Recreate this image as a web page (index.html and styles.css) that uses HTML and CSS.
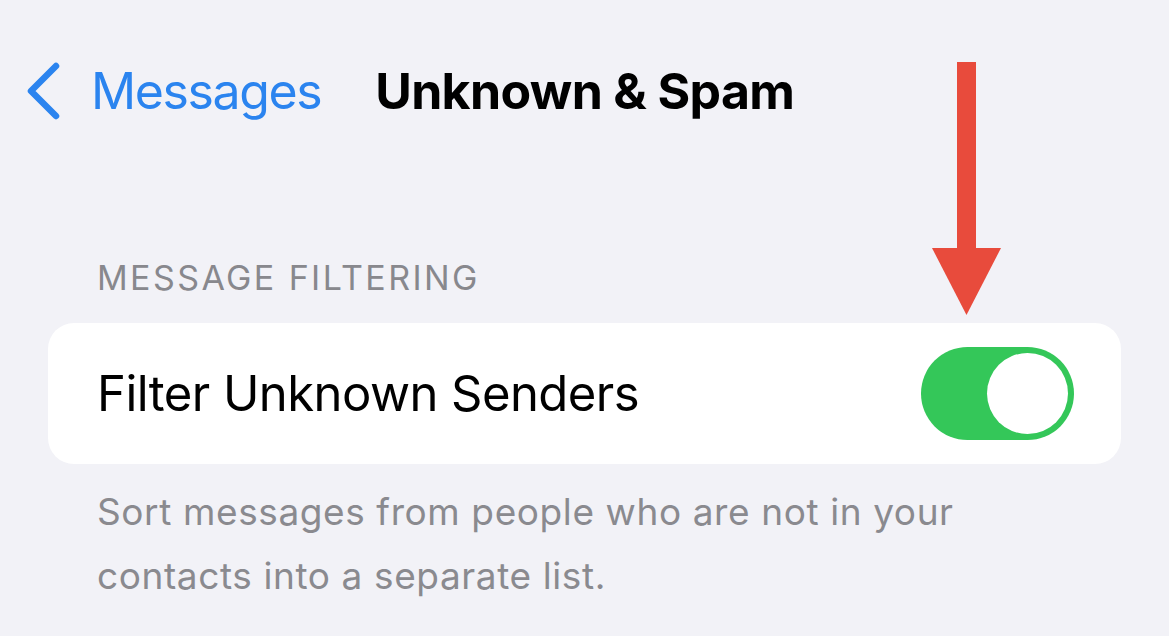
FILE: index.html
```html
<!DOCTYPE html>
<html lang="en">
  <head>
    <meta charset="UTF-8" />
    <meta name="viewport" content="width=device-width, initial-scale=1.0" />
    <title>Unknown &amp; Spam</title>
    <link rel="stylesheet" href="styles.css">
  </head>

  <body>
    <div class="screen">
      <!-- top bar -->
      <div class="navbar">
        <a class="back" href="#">
          <svg class="chevron" width="36" height="58" viewBox="0 0 36 58">
            <path d="M31 4 L6 29 L31 54" fill="none" stroke="#2b84ef" stroke-width="6.5"
              stroke-linecap="round" stroke-linejoin="round" />
          </svg>
          <span>Messages</span>
        </a>
        <h1 class="title">Unknown &amp; Spam</h1>
      </div>

      <!-- filtering group -->
      <div class="group">
        <div class="group-header">MESSAGE FILTERING</div>
        <div class="card">
          <div class="row">
            <span class="row-label">Filter Unknown Senders</span>
            <div class="switch on">
              <div class="knob"></div>
            </div>
          </div>
        </div>
        <p class="group-footer">
          Sort messages from people who are not in your<br />
          contacts into a separate list.
        </p>
      </div>

      <!-- red pointer -->
      <svg class="pointer" width="70" height="254" viewBox="0 0 70 254">
        <rect x="25" y="0" width="19" height="188" fill="#e84b3c" />
        <polygon points="0,186 69,186 34.5,253" fill="#e84b3c" />
      </svg>
    </div>
  </body>
</html>
```

FILE: styles.css
```css
* {
  margin: 0;
  padding: 0;
  box-sizing: border-box;
}
body {
  background: #f2f2f7;
  font-family: Inter, "Noto Sans", "Liberation Sans", sans-serif;
  overflow: hidden;
}
.screen {
  position: relative;
  width: 1169px;
  height: 636px;
  padding: 0 48px;
}

/* 上方導覽列 */
.navbar {
  display: flex;
  align-items: center;
  height: 182px;
}
.back {
  display: flex;
  align-items: center;
  gap: 30px;
  margin-left: -23px;
  color: #2b84ef;
  text-decoration: none;
  font-size: 50px;
  letter-spacing: -1.4px;
}
.chevron {
  display: block;
}
.title {
  margin-left: 54px;
  font-size: 50px;
  font-weight: 700;
  color: #000;
  letter-spacing: -0.65px;
}

/* 群組 */
.group-header {
  padding-left: 49px;
  font-size: 34px;
  color: #88888d;
  letter-spacing: 2.4px;
  line-height: 1;
  margin-top: 79px;
  margin-bottom: 28px;
}
.card {
  background: #fff;
  border-radius: 26px;
}
.row {
  display: flex;
  align-items: center;
  justify-content: space-between;
  height: 141px;
  padding: 0 47px 0 49px;
}
.row-label {
  font-size: 49px;
  color: #000;
  letter-spacing: -0.55px;
}

/* 開關 */
.switch {
  width: 153px;
  height: 93px;
  border-radius: 47px;
  background: #34c759;
  padding: 6px;
  display: flex;
  justify-content: flex-end;
}
.knob {
  width: 81px;
  height: 81px;
  border-radius: 50%;
  background: #fff;
}

.group-footer {
  padding-left: 49px;
  margin-top: 16px;
  font-size: 37px;
  line-height: 64px;
  color: #8a8a8f;
  letter-spacing: 0.6px;
}

/* 指向開關的紅色箭頭 */
.pointer {
  position: absolute;
  left: 932px;
  top: 62px;
}
```
